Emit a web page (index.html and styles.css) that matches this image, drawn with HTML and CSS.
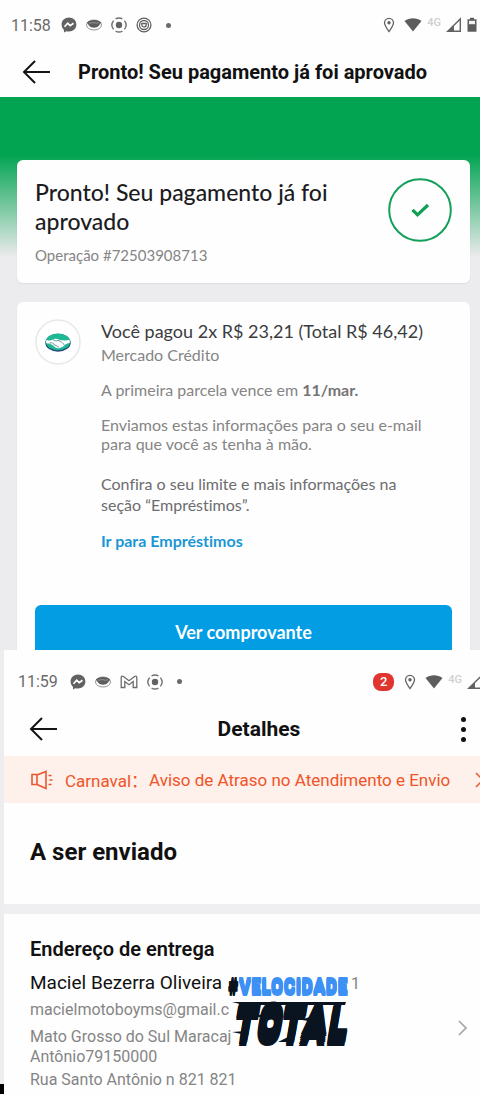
FILE: index.html
```html
<!DOCTYPE html>
<html lang="pt-BR">
<head>
<meta charset="utf-8">
<meta name="viewport" content="width=device-width, initial-scale=1">
<title>Pronto! Seu pagamento já foi aprovado</title>
<link rel="stylesheet" href="styles.css">
</head>
<body>
<svg class="defs" aria-hidden="true">
  <symbol id="messenger" viewBox="0 0 16 16"><path fill="#626262" d="M8 .5C3.700.5.600 3.500.600 7.600c0 2.200.900 4 2.400 5.300v2.500l2.300-1.200c.8.200 1.700.4 2.700.4 4.300 0 7.400-3 7.400-7S12.300.5 8 .5z"/><path d="M3.500 9.800 6.700 6.300l2.500 2.300 3.300-2.400" fill="none" stroke="#fff" stroke-width="1.700"/></symbol>
  <symbol id="hands" viewBox="0 0 16 16"><ellipse cx="8" cy="8" rx="7.500" ry="5" fill="#fff" stroke="#888" stroke-width=".9"/><path fill="#5d5d5d" d="M.8 5.600c3-3.500 11.400-3.500 14.400 0l-2.200 2.800c-2 3-8 3-10 0z"/><path d="M3 5.900c2 .8 3-.7 5-.2s3 .7 5 0" fill="none" stroke="#bbb" stroke-width=".6"/></symbol>
  <symbol id="record" viewBox="0 0 16 16"><circle cx="8" cy="8" r="3.200" fill="#626262"/><g fill="none" stroke="#707070" stroke-width="1.400"><path d="M4.600 1.900a7 7 0 0 1 6.800 0M4.600 14.100a7 7 0 0 0 6.800 0M2.600 3.600a7 7 0 0 0 0 8.800M13.400 3.600a7 7 0 0 1 0 8.800"/></g></symbol>
  <symbol id="target" viewBox="0 0 16 16"><g fill="none" stroke="#626262" stroke-width="1.300"><circle cx="8" cy="8" r="6.900"/><circle cx="8" cy="8" r="4.500"/><path d="M5.800 6.500h4.400v1.200c0 3-4.400 3-4.400 0z"/></g></symbol>
  <symbol id="mail" viewBox="0 0 18 16"><path d="M1.200 13.500V3.500c0-1.500 1.300-1.600 2.200-.9L9 6.800l5.600-4.200c.9-.7 2.200-.6 2.200.9v10h-3.600V7.600L9 10.800 4.800 7.600v5.900z" fill="none" stroke="#6c6c6c" stroke-width="1.300"/></symbol>
  <symbol id="pin" viewBox="0 0 12 16"><path d="M6 14.500C3.500 11 1.500 8.500 1.500 5.800a4.500 4.500 0 0 1 9 0C10.500 8.500 8.500 11 6 14.500z" fill="none" stroke="#626262" stroke-width="1.300"/><circle cx="6" cy="5.800" r="1.700" fill="#626262"/></symbol>
  <symbol id="wifi" viewBox="0 0 18 16"><path fill="#5d5d5d" d="M.5 4C5.500.3 12.500.3 17.500 4L9 14.500z"/></symbol>
  <symbol id="signal" viewBox="0 0 16 16"><path d="M14.300 2v12.300H1.700z" fill="none" stroke="#626262" stroke-width="1.400"/><path d="M8 8.500v6H1.500z" fill="#626262"/></symbol>
  <symbol id="battery" viewBox="0 0 10 16"><path fill="#5d5d5d" d="M3 .8h4v1.500h2.500v12.500h-9V2.300H3z"/><path fill="#f2f2f2" d="M2 3.800h6v3.400H2z"/></symbol>
  <symbol id="back" viewBox="0 0 28 26"><path d="M13 2 2 13l11 11M2 13h26" fill="none" stroke="#151515" stroke-width="2"/></symbol>
</svg>

<main class="page">
  <section class="screen payment">
    <div class="status">
      <time class="clock">11:58</time>
      <div class="notices">
        <svg class="ico"><use href="#messenger"/></svg>
        <svg class="ico"><use href="#hands"/></svg>
        <svg class="ico"><use href="#record"/></svg>
        <svg class="ico"><use href="#target"/></svg>
        <i class="dot"></i>
      </div>
      <div class="system">
        <svg class="ico pin"><use href="#pin"/></svg>
        <svg class="ico wide"><use href="#wifi"/></svg>
        <span class="net">4G</span>
        <svg class="ico"><use href="#signal"/></svg>
        <svg class="ico battery"><use href="#battery"/></svg>
      </div>
    </div>
    <header class="bar">
      <button class="back" aria-label="Voltar"><svg><use href="#back"/></svg></button>
      <h1 class="bar-title">Pronto! Seu pagamento já foi aprovado</h1>
    </header>
    <div class="content">
      <article class="card approved">
        <div class="approved-text">
          <h2 class="approved-title">Pronto! Seu pagamento já foi aprovado</h2>
          <p class="operation">Operação #72503908713</p>
        </div>
        <svg class="check" viewBox="0 0 64 64"><circle cx="32" cy="32" r="30.800" fill="none" stroke="#14a05a" stroke-width="2"/><path d="m24.500 31.800 5 5L40 27" fill="none" stroke="#0d9f54" stroke-width="3.200"/></svg>
      </article>
      <article class="card receipt">
        <div class="receipt-body">
          <svg class="brand" viewBox="0 0 46 46"><circle cx="23" cy="23" r="22" fill="#fff" stroke="#e8e7ea" stroke-width="1.500"/><ellipse cx="23" cy="23.700" rx="12.700" ry="9" fill="#24507c"/><ellipse cx="23" cy="22.800" rx="12" ry="8.400" fill="#20b795"/><path d="M11.200 21c3 1 5 .2 7.500-.8 2-.8 3.500-.2 4.700.2 4 1 7 1.500 11.300.3v3.300c-2.500.2-3.500.8-5.200 2.300-2.500 2.600-6.500 3.800-9.500 2-3-3-5-4-8.800-4z" fill="#fff"/><path d="M18 20.500c1.500 1.500 3 1.500 5 1 3 0 4.500 3 6.500 4.500M14.500 24c3-.5 4 0 5 2 2.500.2 2.500 2 4.500 2" fill="none" stroke="#5b8a98" stroke-width=".9"/></svg>
          <div class="details">
            <h3 class="paid">Você pagou 2x R$ 23,21 (Total R$ 46,42)</h3>
            <p class="method">Mercado Crédito</p>
            <p class="due">A primeira parcela vence em <b>11/mar.</b></p>
            <p class="mail-note">Enviamos estas informações para o seu e-mail para que você as tenha à mão.</p>
            <p class="limit">Confira o seu limite e mais informações na seção “Empréstimos”.</p>
            <a class="loans" href="#">Ir para Empréstimos</a>
          </div>
        </div>
        <button class="primary">Ver comprovante</button>
      </article>
    </div>
  </section>

  <section class="screen order">
    <div class="status">
      <time class="clock">11:59</time>
      <div class="notices">
        <svg class="ico"><use href="#messenger"/></svg>
        <svg class="ico"><use href="#hands"/></svg>
        <svg class="ico wide"><use href="#mail"/></svg>
        <svg class="ico"><use href="#record"/></svg>
        <i class="dot"></i>
      </div>
      <div class="system">
        <span class="count">2</span>
        <svg class="ico pin"><use href="#pin"/></svg>
        <svg class="ico wide"><use href="#wifi"/></svg>
        <span class="net">4G</span>
        <svg class="ico"><use href="#signal"/></svg>
      </div>
    </div>
    <header class="bar">
      <button class="back" aria-label="Voltar"><svg><use href="#back"/></svg></button>
      <h2 class="bar-title">Detalhes</h2>
      <button class="more" aria-label="Mais opções"><i></i><i></i><i></i></button>
    </header>
    <a class="alert" href="#">
      <svg class="horn" viewBox="0 0 22 20"><path d="M1 4.500h5v10H1zM6 5l9-3.500v17L6 14.500" fill="none" stroke="#e9582f" stroke-width="1.600"/><path d="M17.500 5.500h3M18.500 10h3M17.500 14.500h3" stroke="#e9582f" stroke-width="1.500"/></svg>
      <span class="topic">Carnaval：</span>
      <span class="notice">Aviso de Atraso no Atendimento e Envio</span>
      <svg class="go" viewBox="0 0 10 16"><path d="m1 1 7 7-7 7" fill="none" stroke="#e9582f" stroke-width="1.500"/></svg>
    </a>
    <h2 class="state">A ser enviado</h2>
    <div class="address">
      <div class="address-text">
        <h3 class="address-title">Endereço de entrega</h3>
        <p class="person">Maciel Bezerra Oliveira <span class="phone">1</span></p>
        <p class="line">macielmotoboyms@gmail.c</p>
        <p class="line region">Mato Grosso do Sul Maracaj<br>Antônio79150000</p>
        <p class="line">Rua Santo Antônio n 821 821</p>
      </div>
      <svg class="chevron" viewBox="0 0 10 16"><path d="m1 1 7 7-7 7" fill="none" stroke="#a5a5a8" stroke-width="1.700"/></svg>
      <div class="sticker">
        <svg class="streaks" viewBox="0 0 120 76"><path fill="#0a1420" d="M4 27h114l-1 3H16zM4 57l14-1v4zM26 41l10-2v4zM50 67l10-5v5zM74 45l12-5v7z"/></svg>
        <div class="speed"><span>#</span>VELOCIDADE</div>
        <div class="total">TOTAL</div>
      </div>
    </div>
  </section>
</main>
</body>
</html>
```
FILE: styles.css
```css
* { box-sizing: border-box; }
body {
  margin: 0;
  background: #ededef;
  font-family: Roboto, "Noto Sans CJK SC", sans-serif;
  color: #111;
}
h1, h2, h3, p { margin: 0; font-weight: 400; }
button { border: 0; padding: 0; background: none; font: inherit; color: inherit; }
a { text-decoration: none; }
svg { display: block; flex: none; }
.defs { position: absolute; width: 0; height: 0; }

.page { overflow: hidden; background: linear-gradient(#000, #000) left bottom / 4px 11px no-repeat #ededef; }
.screen { overflow: hidden; }

/* Status bars */
.status { display: flex; align-items: center; height: 50px; padding-left: 11px; }
.clock { width: 39px; margin-right: 11px; font-size: 16px; color: #6a6a6a; }
.notices, .system { display: flex; align-items: center; gap: 9px; }
.system { margin-left: auto; gap: 5px; }
.ico { width: 16px; height: 16px; }
.ico.wide { width: 18px; }
.ico.pin { width: 12px; margin-right: 4px; }
.ico.battery { width: 10px; }
.dot { width: 5px; height: 5px; margin-left: 5px; border-radius: 50%; background: #6a6a6a; }
.net { margin-bottom: 5px; font-size: 11px; font-weight: 500; color: #cfcfcf; }
.count { width: 21px; height: 18px; margin-right: 5px; border-radius: 8px; background: #e0352f; color: #fff; font-size: 13px; font-weight: 500; line-height: 18px; text-align: center; }

/* Title bars */
.bar { display: flex; align-items: center; }
.back svg { width: 28px; height: 26px; }
.bar-title { font-size: 20px; font-weight: 700; line-height: 24px; white-space: nowrap; }

/* Payment */
.payment { height: 650px; background: #fefefe; }
.payment .system { padding-right: 3px; }
.payment .bar { height: 47px; padding: 0 22px 4px; gap: 28px; }
.content { padding: 63px 10px 0 17px; background: linear-gradient(#02a452 58px, #ecebed 160px); }
.card { border-radius: 6px; background: #fefefe; box-shadow: 0 1px 2px rgba(0, 0, 0, .06); font-family: Lato, sans-serif; font-variant-ligatures: none; }
.approved { display: flex; justify-content: space-between; align-items: flex-start; padding: 18px; }
.approved-text { max-width: 320px; }
.approved-title { font-size: 23px; font-weight: 500; line-height: 29px; color: #1c1c1e; }
.operation { margin-top: 10px; font-size: 15px; line-height: 19px; color: #858585; }
.check { width: 64px; height: 64px; }
.receipt { margin-top: 19px; padding: 17px 18px 0; }
.receipt-body { display: flex; gap: 20px; }
.brand { width: 46px; height: 46px; }
.details { max-width: 330px; font-size: 16px; line-height: 20px; color: #858585; }
.paid { font-size: 18px; line-height: 24px; color: #3c3c3e; white-space: nowrap; }
.method { margin-top: 2px; }
.due { margin-top: 15px; }
.due b { color: #757575; }
.mail-note { margin-top: 15px; line-height: 19px; }
.limit { margin-top: 20px; line-height: 21px; color: #6c6c6e; }
.loans { display: block; margin-top: 16px; font-weight: 700; color: #1b97d4; }
.primary { display: block; width: 100%; height: 54px; margin-top: 54px; border-radius: 6px; background: #029de3; color: #fff; font-size: 18px; font-weight: 700; }

/* Order */
.order { margin-left: 4px; background: #fefefe; }
.order .status { height: 63px; padding-left: 14px; }
.order .notices { margin-left: 2px; }
.order .system { margin-right: -3px; }
.order .bar { height: 43px; padding: 0 14px 11px 25px; justify-content: space-between; }
.more { display: flex; flex-direction: column; gap: 5px; }
.more i { width: 5px; height: 5px; border-radius: 50%; background: #111; }
.order .bar-title { font-size: 21px; }
.alert { display: flex; align-items: center; height: 47px; margin-right: -5px; padding-left: 26px; background: #fef0ea; color: #f05428; font-size: 17px; }
.horn { width: 24px; height: 20px; margin-right: 11px; }
.topic, .notice { white-space: nowrap; }
.topic { width: 84px; }
.go { width: 10px; height: 16px; margin-left: auto; }
.state { padding: 34px 26px 37px; border-bottom: 10px solid #efeef1; font-size: 24px; font-weight: 700; line-height: 30px; }
.address { position: relative; display: flex; align-items: center; justify-content: space-between; padding: 22px 12px 5px 26px; }
.address-title { font-size: 20px; font-weight: 600; line-height: 26px; }
.person { margin-top: 5px; font-size: 19px; line-height: 32px; }
.phone { margin-left: 124px; font-size: 16px; color: #858585; }
.line { font-size: 16px; line-height: 20px; color: #858585; }
.region { margin: 7px 0 3px; }
.chevron { width: 10px; height: 16px; margin-top: 30px; }

/* Sticker laid over the address */
.sticker { position: absolute; left: 224px; top: 61px; width: 120px; height: 76px; font-family: "Roboto Condensed", Roboto, sans-serif; font-weight: 900; white-space: nowrap; }
.speed { position: relative; font-size: 21px; line-height: 25px; color: #3d91f5; text-shadow: 0 -2px, 0 -1px, 0 1px, 0 2px; }
.speed span { color: #0a1420; }
.total { position: relative; padding-left: 6px; font-size: 44px; font-style: italic; line-height: 51px; color: #0a1420; text-shadow: -1px 6px, -1px 4px, 0 2px, 0 -2px, 1px -4px, 1px -6px; }
.streaks { position: absolute; left: 0; top: 0; width: 120px; height: 76px; }
```
